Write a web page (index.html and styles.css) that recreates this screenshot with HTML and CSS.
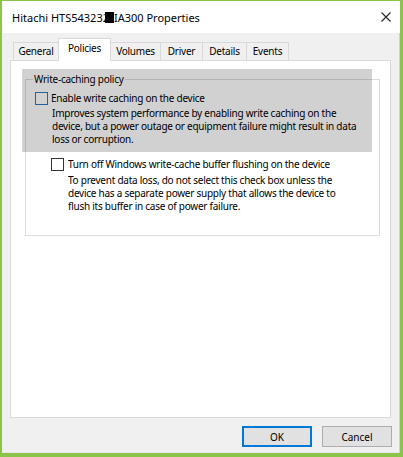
FILE: index.html
```html
<!DOCTYPE html>
<html>
<head>
<meta charset="utf-8">
<link rel="stylesheet" href="styles.css">
</head>
<body>
<div class="window">
  <div class="titlebar">
    <span class="title">Hitachi HTS543232<span class="redact"></span>IA300 Properties</span>
    <svg class="close" width="10" height="10" viewBox="0 0 10 10"><path d="M0.5 0.5 L9.5 9.5 M9.5 0.5 L0.5 9.5" stroke="#222" stroke-width="1.1" fill="none"/></svg>
  </div>
  <div class="tabs">
    <div class="tab tab-general">General</div>
    <div class="tab tab-policies active">Policies</div>
    <div class="tab tab-volumes">Volumes</div>
    <div class="tab tab-driver">Driver</div>
    <div class="tab tab-details">Details</div>
    <div class="tab tab-events">Events</div>
  </div>
  <div class="panel">
    <fieldset class="group">
      <legend>Write-caching policy</legend>
      <div class="check-row first">
        <span class="box hover"></span>
        <span class="label">Enable write caching on the device</span>
      </div>
      <p class="desc first">Improves system performance by enabling write caching on the<br>device, but a power outage or equipment failure might result in data<br>loss or corruption.</p>
      <div class="check-row second">
        <span class="box"></span>
        <span class="label">Turn off Windows write-cache buffer flushing on the device</span>
      </div>
      <p class="desc second">To prevent data loss, do not select this check box unless the<br>device has a separate power supply that allows the device to<br>flush its buffer in case of power failure.</p>
    </fieldset>
    <div class="highlight"></div>
  </div>
  <div class="buttons">
    <button class="btn default">OK</button>
    <button class="btn">Cancel</button>
  </div>
</div>
</body>
</html>
```
FILE: styles.css
```css
* { box-sizing: border-box; }
html, body { margin: 0; padding: 0; }
body {
  width: 403px;
  height: 457px;
  overflow: hidden;
  font-family: "Noto Sans", "Open Sans", sans-serif;
  font-size: 10px;
  letter-spacing: -0.25px;
  color: #000;
  background: #86bf45;
}
.window {
  height: 457px;
  border-style: solid;
  border-color: #8cc44a;
  border-width: 1px 3px 4px 2px;
  background: #f0f0f0;
  display: flex;
  flex-direction: column;
  box-shadow: inset -1px 0 0 #d0d0d0, inset 0 -1px 0 #e8e8e8;
}
.titlebar {
  height: 32px;
  flex: none;
  background: #fff;
  display: flex;
  align-items: center;
  justify-content: space-between;
  padding: 0 9px 0 10px;
}
.title {
  font-size: 11px;
  letter-spacing: 0;
  display: flex;
  align-items: center;
}
.redact {
  display: inline-block;
  width: 9px;
  height: 11px;
  background: #000;
  margin: 0 0 0 -4px;
}
.close { display: block; }
.tabs {
  height: 27px;
  flex: none;
  display: flex;
  align-items: flex-end;
  padding-left: 11px;
}
.tab {
  height: 18px;
  border: 1px solid #d9d9d9;
  border-bottom: none;
  margin-left: -1px;
  background: #f0f0f0;
  text-align: center;
  line-height: 16px;
}
.tab-general { margin-left: 0; width: 46px; }
.tab-policies { width: 53px; }
.tab-volumes { width: 51px; }
.tab-driver { width: 43px; }
.tab-details { width: 45px; }
.tab-events { width: 43px; }
.tab.active {
  height: 23px;
  margin-bottom: -1px;
  background: #fff;
  position: relative;
  z-index: 1;
  line-height: 19px;
}
.panel {
  position: relative;
  height: 358px;
  flex: none;
  margin: 0 9px 0 8px;
  border: 1px solid #d9d9d9;
  background: #fff;
}
.group {
  margin: 12px 10px 0 14px;
  padding: 0 0 22px 0;
  border: 1px solid #dcdcdc;
  min-width: 0;
}
.group legend {
  margin-left: 7px;
  padding: 0 1px;
  line-height: 13px;
}
.check-row {
  display: flex;
  align-items: center;
  line-height: 13px;
}
.check-row.first { margin: 6px 0 0 9px; gap: 3px; }
.check-row.second { margin: 12px 0 0 25px; gap: 4px; }
.box {
  width: 13px;
  height: 13px;
  border: 1px solid #333;
  background: #fff;
  flex: none;
}
.box.hover { border-color: #2b79c4; }
.desc {
  margin: 0;
  line-height: 13px;
  white-space: nowrap;
}
.desc.first { margin: 2px 0 0 26px; }
.desc.second { margin: 3px 0 0 42px; }
.highlight {
  position: absolute;
  left: 11px;
  top: 8px;
  width: 350px;
  height: 83px;
  background: rgba(0, 0, 0, 0.18);
}
.buttons {
  display: flex;
  justify-content: flex-end;
  gap: 10px;
  padding: 8px 8px 0 0;
}
.btn {
  width: 70px;
  height: 21px;
  padding: 0;
  background: #e1e1e1;
  border: 1px solid #adadad;
  font: inherit;
  color: #000;
}
.btn.default { border: 2px solid #0078d7; }
```
